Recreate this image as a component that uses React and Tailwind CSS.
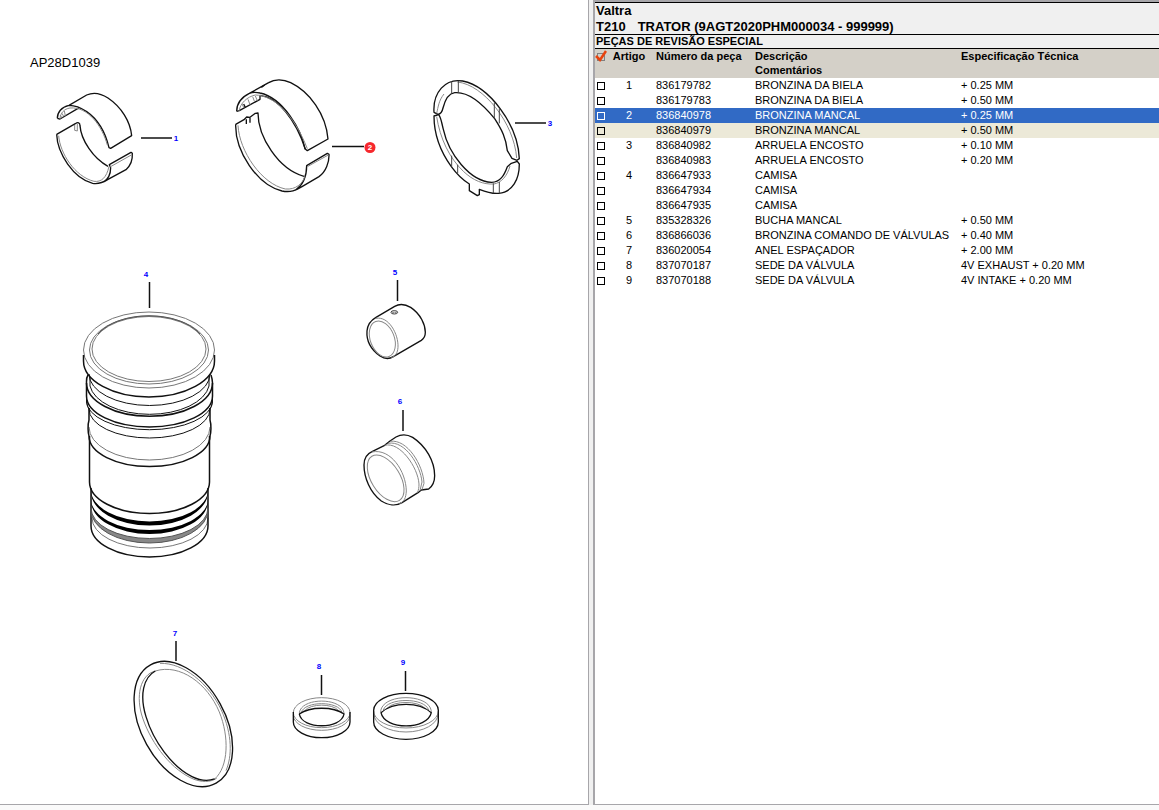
import React, { useState } from 'react';

const parts = [
  { item: '1', number: '836179782', desc: 'BRONZINA DA BIELA', spec: '+ 0.25 MM' },
  { item: '', number: '836179783', desc: 'BRONZINA DA BIELA', spec: '+ 0.50 MM' },
  { item: '2', number: '836840978', desc: 'BRONZINA MANCAL', spec: '+ 0.25 MM' },
  { item: '', number: '836840979', desc: 'BRONZINA MANCAL', spec: '+ 0.50 MM', related: true },
  { item: '3', number: '836840982', desc: 'ARRUELA ENCOSTO', spec: '+ 0.10 MM' },
  { item: '', number: '836840983', desc: 'ARRUELA ENCOSTO', spec: '+ 0.20 MM' },
  { item: '4', number: '836647933', desc: 'CAMISA', spec: '' },
  { item: '', number: '836647934', desc: 'CAMISA', spec: '' },
  { item: '', number: '836647935', desc: 'CAMISA', spec: '' },
  { item: '5', number: '835328326', desc: 'BUCHA MANCAL', spec: '+ 0.50 MM' },
  { item: '6', number: '836866036', desc: 'BRONZINA COMANDO DE VÁLVULAS', spec: '+ 0.40 MM' },
  { item: '7', number: '836020054', desc: 'ANEL ESPAÇADOR', spec: '+ 2.00 MM' },
  { item: '8', number: '837070187', desc: 'SEDE DA VÁLVULA', spec: '4V EXHAUST + 0.20 MM' },
  { item: '9', number: '837070188', desc: 'SEDE DA VÁLVULA', spec: '4V INTAKE + 0.20 MM' },
];

const callouts = [
  { n: '1', x: 176, y: 141, line: 'M141 138H172' },
  { n: '3', x: 550, y: 126, line: 'M515 123H546' },
  { n: '4', x: 146, y: 277, line: 'M149.500 282V308' },
  { n: '5', x: 395, y: 275, line: 'M397.500 280V301' },
  { n: '6', x: 400, y: 404, line: 'M403 410V431' },
  { n: '7', x: 175, y: 636, line: 'M176 641V661' },
  { n: '8', x: 319, y: 669, line: 'M321.500 675V695' },
  { n: '9', x: 403, y: 665, line: 'M405.500 671V691' },
];

// Each part is drawn on its own grid, three units to a pixel
const RodBearing = () => (
  <g transform="translate(20 45) scale(0.3333)">
    <g stroke="#111" strokeWidth="4">
      <path d="M112 220C112 202 124 186 147 181L200 150C222 140 244 146 264 159C304 186 331 229 335 272L272 310L267 308C256 262 232 222 200 200C180 186 160 181 147 181" />
      <path d="M112 220L120 222L178 188" />
      <path d="M110 268L166 236C174 230 180 233 180 242C183 285 220 341 264 364" />
      <path d="M110 268C112 325 160 400 218 415C236 418 250 412 264 403L318 374C332 362 338 342 337 325L333 322L268 359L272 368C272 388 265 402 250 411" />
    </g>
    <g stroke="#888" strokeWidth="3">
      <path d="M120 222C121 204 132 192 150 189C205 184 247 245 262 300" />
      <path d="M116 272C120 325 165 395 222 409C244 412 260 398 267 364" />
      <path d="M120 210L126 218M126 205L131 214M133 198L136 212M164 240V256L172 258V236" />
      <path d="M270 366L334 330" />
    </g>
  </g>
);

const MainBearing = () => (
  <g transform="translate(220 70) scale(0.3333)">
    <g stroke="#111" strokeWidth="4">
      <path d="M50 124C50 100 64 82 88 70L146 38C164 27 190 28 212 38C268 65 318 132 324 207L262 242L255 236C244 180 190 84 120 69C108 66 98 66 88 70" />
      <path d="M50 124L58 122L120 88V76C172 80 228 150 256 238" />
      <path d="M47 163L72 149L80 141L90 142L106 130L114 129C114 200 175 298 252 319" />
      <path d="M47 163C45 244 112 345 186 363C212 368 228 361 246 350L297 320C318 306 328 276 327 253L322 250L260 287C260 318 250 344 226 361" />
      <path d="M79 148V162M90 143V158M71 102L76 112M124 52L134 45" />
    </g>
    <g stroke="#888" strokeWidth="3">
      <path d="M58 122C60 100 82 80 106 75C160 76 220 130 262 236" />
      <path d="M54 166C58 244 125 342 196 357C228 360 248 340 254 320" />
      <path d="M66 102L72 114M84 88L90 104M98 80L104 96M106 78L112 92M262 290L325 255" />
    </g>
  </g>
);

const ThrustWasher = () => (
  <g transform="translate(420 70) scale(0.3333)">
    <g stroke="#111" strokeWidth="4">
      <path d="M42 127C38 68 76 24 128 33C208 49 294 164 298 266L291 271L276 265L262 242C258 205 246 180 224 146C190 104 146 64 104 68C84 71 74 94 69 114C66 128 62 132 54 133Z" />
      <path d="M42 138L56 134C64 145 65 160 70 178C86 252 150 334 215 337C240 336 252 318 262 290L274 280L292 274L298 282C298 328 278 366 236 370C214 372 198 366 178 358V374L172 377L148 362V342C128 330 110 312 94 290C58 240 42 190 42 138Z" />
    </g>
    <g stroke="#888" strokeWidth="3">
      <path d="M50 130C55 110 56 92 72 72" />
      <path d="M112 36C190 44 282 158 290 264" />
      <path d="M50 140C60 205 88 264 130 304C160 332 190 344 222 342C244 338 262 318 270 288" />
      <path d="M95 33V70M115 32V68M223 98V145M238 116V160M95 257V290M113 284V310M220 340V370M238 336V369" stroke="#444" />
    </g>
  </g>
);

const Sleeve = () => (
  <g>
    <g stroke="#777">
      <ellipse cx="149" cy="350" rx="65.500" ry="38" />
      <ellipse cx="149" cy="350" rx="59.500" ry="34" />
      <ellipse cx="149" cy="349" rx="57" ry="32.500" />
      <path d="M89 427A60.500 33 0 0 0 210 427" />
      <path d="M92 518A58 30 0 0 0 208 518" />
    </g>
    <g stroke="#111">
      <path d="M83.500 355V361A65.500 36 0 0 0 214.500 361V355" strokeWidth="1.500" />
      <path d="M98 334A57 33 0 0 1 200 334" stroke="#555" />
      <path d="M89 374A60.500 31.500 0 0 0 210 374" />
      <path d="M88 375C86 378 86.500 381 86.500 383A62.500 33 0 0 0 212.500 383C212.500 381 212 378 211 375" strokeWidth="1.500" />
      <path d="M90 377V386A60 32.500 0 0 0 209 386V377" />
      <path d="M86.500 383V396A63 31 0 0 0 212.500 396V383" strokeWidth="1.500" />
      <path d="M86.500 393V401A62.500 28.500 0 0 0 212.500 401V393" />
      <path d="M86.500 400C86.500 405 88 407 89 409A60.500 29 0 0 0 210 409C211 407 212.500 405 212.500 400" />
      <path d="M89 408V420C87.500 425 88 433 89 436A60.500 30.500 0 0 0 210 436C211 433 211.500 425 210 420V408" strokeWidth="1.500" />
      <path d="M89.500 436V482A60 31.500 0 0 0 209.500 482V436" strokeWidth="1.500" />
      <path d="M91 488V526A58.500 31 0 0 0 208 526V488" strokeWidth="1.500" />
    </g>
    <path d="M91 490A58.500 31.500 0 0 0 208 490V492A58.500 33.500 0 0 1 91 492Z" fill="#000" />
    <path d="M91 499A58.500 31 0 0 0 208 499V501A58.500 33 0 0 1 91 501Z" fill="#000" />
    <path d="M91 508A58.500 30.500 0 0 0 208 508V510A58.500 33 0 0 1 91 510Z" fill="#888" stroke="#555" />
  </g>
);

const Bushing = () => (
  <g transform="translate(350 260) scale(0.3333)">
    <path d="M51 213C53 190 64 180 78 172L134 139C150 130 168 134 182 142C212 162 226 194 226 217C226 230 222 236 214 241L130 290C116 299 102 296 90 288C62 268 49 240 51 213Z" stroke="#111" strokeWidth="4" />
    <g stroke="#888" strokeWidth="3">
      <path d="M78 175C116 168 146 222 144 262C143 278 136 290 124 293" />
      <ellipse cx="97" cy="237" rx="36" ry="56" transform="rotate(-21 97 237)" />
      <ellipse cx="133" cy="157" rx="10" ry="5" stroke="#333" />
      <path d="M125 159Q133 154 141 159" />
    </g>
  </g>
);

const CamBearing = () => (
  <g transform="translate(350 390) scale(0.3333)">
    <path d="M42 225C42 206 50 192 66 185L104 166L120 153L138 141C154 132 172 133 188 142C228 168 254 214 254 257C254 276 248 288 236 297L214 300L204 308L156 338C138 349 114 346 94 333C60 308 42 262 42 225Z" stroke="#111" strokeWidth="4" />
    <g stroke="#888" strokeWidth="3">
      <path d="M66 186C122 174 168 244 169 303C168 324 162 336 148 341" />
      <ellipse cx="107" cy="265" rx="43" ry="78" transform="rotate(-32 107 265)" />
      <path d="M104 166C150 154 204 232 207 282C207 292 206 300 202 308" />
      <path d="M114 160C166 150 212 228 216 276L210 302" />
      <path d="M120 154C172 146 220 226 222 280L216 299" />
    </g>
  </g>
);

const SpacerRing = () => (
  <g transform="translate(120 620) scale(0.3333)">
    <ellipse cx="190" cy="312" rx="126" ry="203" transform="rotate(-29 190 312)" stroke="#111" strokeWidth="4" />
    <g stroke="#888" strokeWidth="3">
      <path d="M106 153C60 164 46 230 68 294C96 376 158 452 222 478C244 486 270 488 290 475" />
      <path d="M106 153C180 130 262 190 298 276C328 350 326 440 284 477" />
      <path d="M120 130C190 128 266 190 304 270C338 345 336 410 318 452" />
    </g>
    <path d="M106 153C70 172 58 226 78 290C100 364 156 440 216 470C240 482 262 485 284 477" stroke="#111" strokeWidth="4" />
  </g>
);

const ValveSeats = () => (
  <g transform="translate(280 650) scale(0.3333)">
    <g stroke="#888" strokeWidth="3">
      <ellipse cx="125" cy="188" rx="85" ry="45" />
      <path d="M40 196A85 45 0 0 0 210 196" />
      <path d="M58 193C56 140 194 140 192 193" />
      <path d="M64 188C72 152 178 152 186 188" />
      <path d="M74 182C92 160 158 160 176 182" />
    </g>
    <g stroke="#111" strokeWidth="4">
      <path d="M40 186V216A85 47 0 0 0 210 216V186" />
      <path d="M58 192C90 169 160 169 192 192C184 239 66 239 58 192" />
    </g>
    <g stroke="#888" strokeWidth="3">
      <path d="M281 183A97 51 0 0 0 475 183" />
      <path d="M282 192A96 54 0 0 0 474 192" />
      <path d="M302 188C300 128 456 128 454 188" />
      <path d="M310 180C322 142 434 142 446 180" />
      <path d="M322 174C342 152 414 152 434 174" />
    </g>
    <g stroke="#111" strokeWidth="4">
      <path d="M281 181A97 51 0 0 1 475 181V216A97 52 0 0 1 281 216Z" />
      <path d="M303 188C340 155 416 155 454 188C442 241 314 241 303 188" />
    </g>
  </g>
);

const Drawing = () => (
  <svg
    viewBox="0 0 588 804"
    preserveAspectRatio="xMinYMin meet"
    className="block h-full w-full font-['Liberation_Sans',sans-serif]"
    fill="none"
    strokeLinejoin="round"
    role="img"
    aria-label="AP28D1039"
  >
    <text x="30" y="67" fontSize="13" fill="#000">AP28D1039</text>
    <RodBearing />
    <MainBearing />
    <ThrustWasher />
    <Sleeve />
    <Bushing />
    <CamBearing />
    <SpacerRing />
    <ValveSeats />
    {callouts.map((c) => (
      <g key={c.n}>
        <path d={c.line} stroke="#111" strokeWidth="1.500" />
        <text x={c.x} y={c.y} textAnchor="middle" fontSize="8" fontWeight="bold" fill="#0000ff">{c.n}</text>
      </g>
    ))}
    <path d="M332 146.500H364" stroke="#111" strokeWidth="1.500" />
    <circle cx="370" cy="147.500" r="5.500" fill="#f6282d" />
    <text x="370" y="150" textAnchor="middle" fontSize="8" fontWeight="bold" fill="#fff">2</text>
  </svg>
);

const HeaderCheck = () => (
  <svg className="block" width="12" height="14" viewBox="0 0 12 14" fill="none" aria-hidden="true">
    <rect x="2.500" y="4.500" width="7" height="7" stroke="#808080" />
    <path d="M1 7L5 11L11 2" stroke="#e8420c" strokeWidth="2.500" />
  </svg>
);

const PartRow = ({ part, selected, onSelect }) => {
  let color = 'bg-white text-black';
  if (selected) {
    color = 'bg-[#316ac5] text-white';
  } else if (part.related) {
    color = 'bg-[#ece9d8] text-black';
  }

  return (
    <tr className={`h-[15px] leading-[15px] ${color}`} onClick={onSelect}>
      <td className="p-0 align-top">
        <input
          type="checkbox"
          aria-label={part.number}
          className="mt-1 ml-0.5 block size-2 appearance-none border border-current checked:bg-current"
        />
      </td>
      <td className="p-0 text-center">{part.item}</td>
      <td className="p-0 pl-[5px]">{part.number}</td>
      <td className="p-0 pl-[5px]">{part.desc}</td>
      <td className="p-0 pl-[5px]">{part.spec}</td>
    </tr>
  );
};

const App = () => {
  const [selected, setSelected] = useState('836840978');

  return (
    <div className="flex h-screen flex-col bg-[#fafafa] pb-[5px] font-['Liberation_Sans',sans-serif] text-black">
      <div className="grid min-h-0 flex-1 grid-cols-[589fr_4px_566fr]">
        <section className="min-w-0 border-r border-b border-[#a7a6aa] bg-white">
          <Drawing />
        </section>

        <div className="bg-[#f0f0f0]" />

        <section className="min-w-0 overflow-auto border-t-2 border-b border-l-2 border-[#a7a6aa] bg-white whitespace-nowrap">
          <header className="border-t border-b border-black bg-[#f0f0f0] pl-px text-[13px] leading-[15px] font-bold">
            <h1>Valtra</h1>
            <p className="mt-px flex gap-3">
              <span>T210</span>
              <span>TRATOR (9AGT2020PHM000034 - 999999)</span>
            </p>
          </header>
          <h2 className="border-b border-black bg-[#f0f0f0] pl-px text-[11px] leading-[13px] font-bold">
            PEÇAS DE REVISÃO ESPECIAL
          </h2>

          <table className="w-full table-fixed border-collapse text-[11px]">
            <colgroup>
              <col className="w-3" />
              <col className="w-11" />
              <col className="w-[99px]" />
              <col className="w-[206px]" />
              <col />
            </colgroup>
            <thead>
              <tr className="h-[29px] bg-[#d4d0c8] text-left align-top leading-[14px]">
                <th className="p-0"><HeaderCheck /></th>
                <th className="p-0 text-center">Artigo</th>
                <th className="p-0 pl-[5px]">Número da peça</th>
                <th className="p-0 pl-[5px]">Descrição<br />Comentários</th>
                <th className="p-0 pl-[5px]">Especificação Técnica</th>
              </tr>
            </thead>
            <tbody>
              {parts.map((part) => (
                <PartRow
                  key={part.number}
                  part={part}
                  selected={part.number === selected}
                  onSelect={() => setSelected(part.number)}
                />
              ))}
            </tbody>
          </table>
        </section>
      </div>
    </div>
  );
};

export default App;
